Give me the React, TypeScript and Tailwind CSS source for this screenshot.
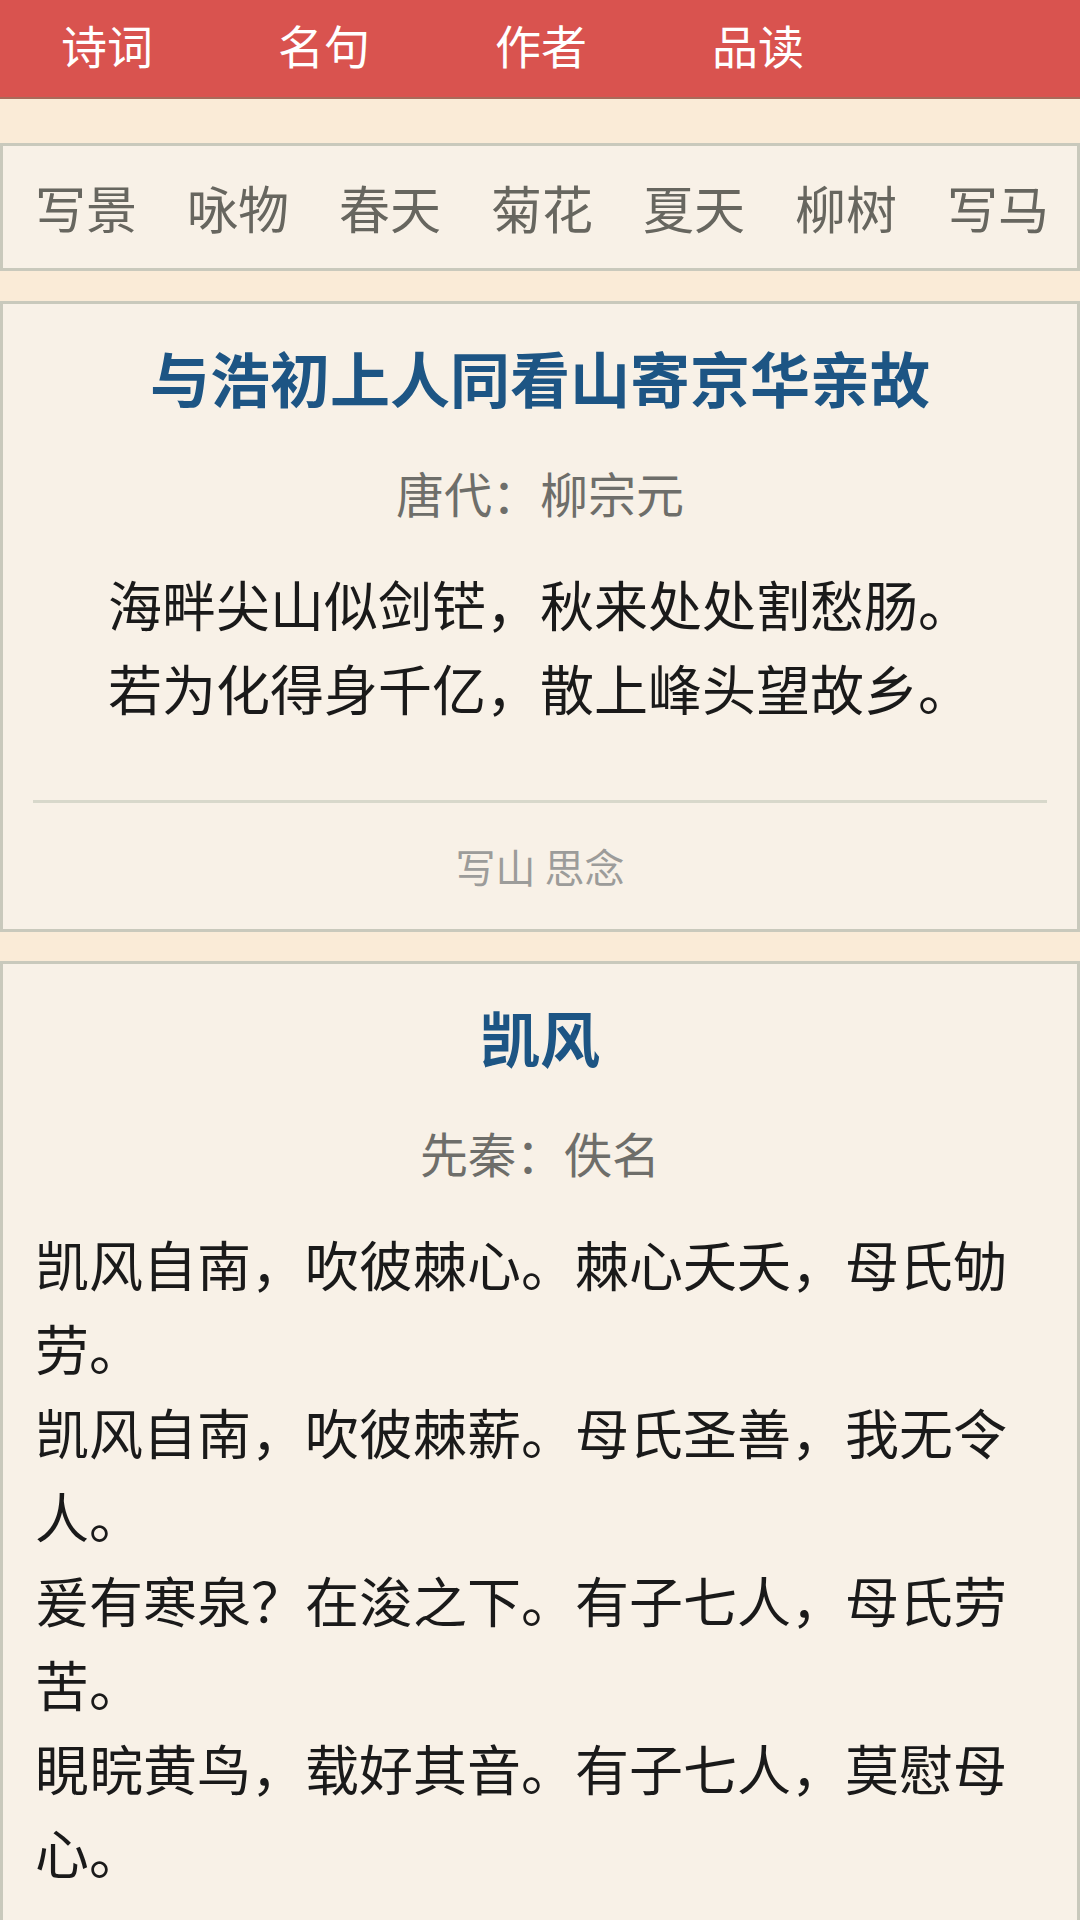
const navItems = ['诗词', '名句', '作者', '品读'];

const tags = ['写景', '咏物', '春天', '菊花', '夏天', '柳树', '写马'];

type Poem = {
  title: string;
  dynasty: string;
  author: string;
  lines: string[];
  centered: boolean;
  tags?: string;
};

const poems: Poem[] = [
  {
    title: '与浩初上人同看山寄京华亲故',
    dynasty: '唐代',
    author: '柳宗元',
    lines: ['海畔尖山似剑铓，秋来处处割愁肠。', '若为化得身千亿，散上峰头望故乡。'],
    centered: true,
    tags: '写山 思念'
  },
  {
    title: '凯风',
    dynasty: '先秦',
    author: '佚名',
    lines: [
      '凯风自南，吹彼棘心。棘心夭夭，母氏劬劳。',
      '凯风自南，吹彼棘薪。母氏圣善，我无令人。',
      '爰有寒泉？在浚之下。有子七人，母氏劳苦。',
      '睍睆黄鸟，载好其音。有子七人，莫慰母心。'
    ],
    centered: false
  }
];

function PoemCard({ poem }: { poem: Poem }) {
  return (
    <section className="border-[3px] border-[#c9c9bc] bg-[#f8f1e7] px-[32px] pt-[29px] pb-[35px]">
      <h2 className="text-center text-[60px] font-bold leading-[88px] text-[#1d5584]">{poem.title}</h2>
      <div className="mt-[37px] text-center text-[48px] leading-[68px] text-[#6e6e6a]">
        {poem.dynasty}：{poem.author}
      </div>
      <div className={poem.centered ? 'mt-[36px] text-center' : 'mt-[36px] text-left'}>
        {poem.lines.map((line) => (
          <p key={line} className="text-[54px] leading-[84px] text-[#1a1a1a]">
            {line}
          </p>
        ))}
      </div>
      {poem.tags ? (
        <>
          <div className="-mx-[2px] mt-[70px] h-[3px] bg-[#d8d8cb]" />
          <div className="mt-[35px] text-center text-[40px] leading-[56px] text-[#9c9c9a]">{poem.tags}</div>
        </>
      ) : null}
    </section>
  );
}

export default function App() {
  return (
    <div className="min-h-[1920px] w-[1080px] overflow-hidden bg-[#faebd7] font-['Noto_Sans_CJK_SC','Noto_Sans',sans-serif]">
      <header className="flex h-[99px] items-center gap-[125px] border-b-2 border-[#a96a5a] bg-[#d9534f] pb-[10px] pl-[61px]">
        {navItems.map((item) => (
          <span key={item} className="text-[46px] leading-none text-white">
            {item}
          </span>
        ))}
      </header>

      <nav className="mt-[44px] flex h-[128px] items-center gap-[50px] border-[3px] border-[#c9c9bc] bg-[#f8f1e7] pl-[32px]">
        {tags.map((tag) => (
          <span key={tag} className="shrink-0 text-[51px] leading-none text-[#67665f]">
            {tag}
          </span>
        ))}
      </nav>

      <div className="mt-[30px] flex flex-col gap-[29px]">
        {poems.map((poem) => (
          <PoemCard key={poem.title} poem={poem} />
        ))}
      </div>
    </div>
  );
}
